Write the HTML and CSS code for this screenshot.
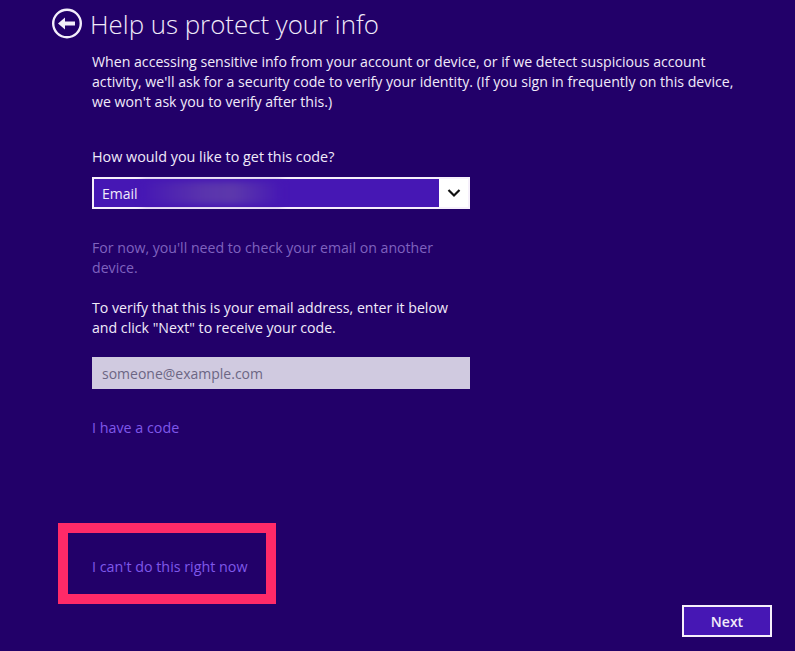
FILE: index.html
```html
<!DOCTYPE html>
<html lang="en">
<head>
<meta charset="utf-8">
<title>Help us protect your info</title>
<link rel="stylesheet" href="styles.css">
</head>
<body>
<main class="page">
  <header class="header">
    <svg class="back" viewBox="0 0 32 32" width="32" height="32" aria-hidden="true">
      <circle cx="16" cy="15.5" r="13.8" fill="none" stroke="#f3eefb" stroke-width="2.4"/>
      <path d="M7 15.5 L14 9.5 V13.4 H24 V17.6 H14 V21.5 Z" fill="#f3eefb"/>
    </svg>
    <h1 class="title">Help us protect your info</h1>
  </header>
  <section class="content">
    <p class="intro">When accessing sensitive info from your account or device, or if we detect suspicious account activity, we'll ask for a security code to verify your identity. (If you sign in frequently on this device, we won't ask you to verify after this.)</p>
    <p class="prompt">How would you like to get this code?</p>
    <div class="select">
      <div class="select-value"><span>Email</span><span class="blur"></span></div>
      <div class="select-arrow">
        <svg viewBox="0 0 14 10" width="14" height="10" aria-hidden="true"><path d="M1.5 2 L7 7.5 L12.5 2" fill="none" stroke="#111" stroke-width="2.2"/></svg>
      </div>
    </div>
    <p class="note">For now, you'll need to check your email on another device.</p>
    <p class="verify">To verify that this is your email address, enter it below and click "Next" to receive your code.</p>
    <div class="input">someone@example.com</div>
    <a class="link have-code">I have a code</a>
    <a class="link cant">I can't do this right now</a>
  </section>
  <footer class="footer"><button class="next">Next</button></footer>
  <div class="highlight"></div>
</main>
</body>
</html>
```
FILE: styles.css
```css
* { box-sizing: border-box; }
html, body { margin: 0; height: 100%; }
body {
  background: #220069;
  color: #f1ebfa;
  font-family: "Open Sans", "Noto Sans", sans-serif;
  overflow: hidden;
}
.page {
  position: relative;
  width: 795px;
  height: 651px;
  display: flex;
  flex-direction: column;
  padding: 8px 23px 14px 51px;
}
.header {
  display: flex;
  align-items: center;
  gap: 7px;
  height: 32px;
}
.back { flex: none; }
.title {
  margin: 0;
  font-size: 25.85px;
  font-weight: 300;
  line-height: 32px;
}
.content {
  flex: 1;
  display: flex;
  flex-direction: column;
  align-items: flex-start;
  padding: 12px 0 0 41px;
}
.intro, .prompt, .note, .verify { margin: 0; font-size: 14.15px; line-height: 20px; font-weight: 400; }
.intro { width: 655px; }
.prompt { margin-top: 35px; font-size: 14.35px; }
.select {
  display: flex;
  width: 378px;
  height: 32px;
  margin-top: 10px;
  border: 2px solid #f6f0fb;
  background: #4617b4;
}
.select-value {
  flex: 1;
  display: flex;
  align-items: center;
  padding-left: 8px;
  font-size: 14px;
}
.blur {
  width: 140px;
  height: 22px;
  margin-left: 4px;
  background: linear-gradient(90deg, #4617b4, #5a34ad 45%, #5c38ac 65%, #4617b4);
  filter: blur(3px);
}
.select-arrow {
  width: 29px;
  background: #fff;
  display: flex;
  align-items: center;
  justify-content: center;
}
.note { width: 378px; margin-top: 29px; color: #7f62bf; }
.verify { width: 378px; margin-top: 20px; }
.input {
  width: 378px;
  height: 32px;
  margin-top: 19px;
  padding-left: 10px;
  background: #d0cae0;
  color: #6c6684;
  font-size: 14px;
  line-height: 34px;
}
.link { color: #7f58ea; font-size: 14.3px; line-height: 20px; }
.have-code { margin-top: 29px; }
.cant { margin-top: 119px; }
.footer { display: flex; justify-content: flex-end; }
.next {
  width: 90px;
  height: 32px;
  border: 2px solid #f6f0fb;
  background: #4617b4;
  color: #f1ebfa;
  font: 600 14px "Open Sans", "Noto Sans", sans-serif;
}
.highlight {
  position: absolute;
  left: 58px;
  top: 523px;
  width: 218px;
  height: 81px;
  border: 10px solid #ff2a68;
}
```
